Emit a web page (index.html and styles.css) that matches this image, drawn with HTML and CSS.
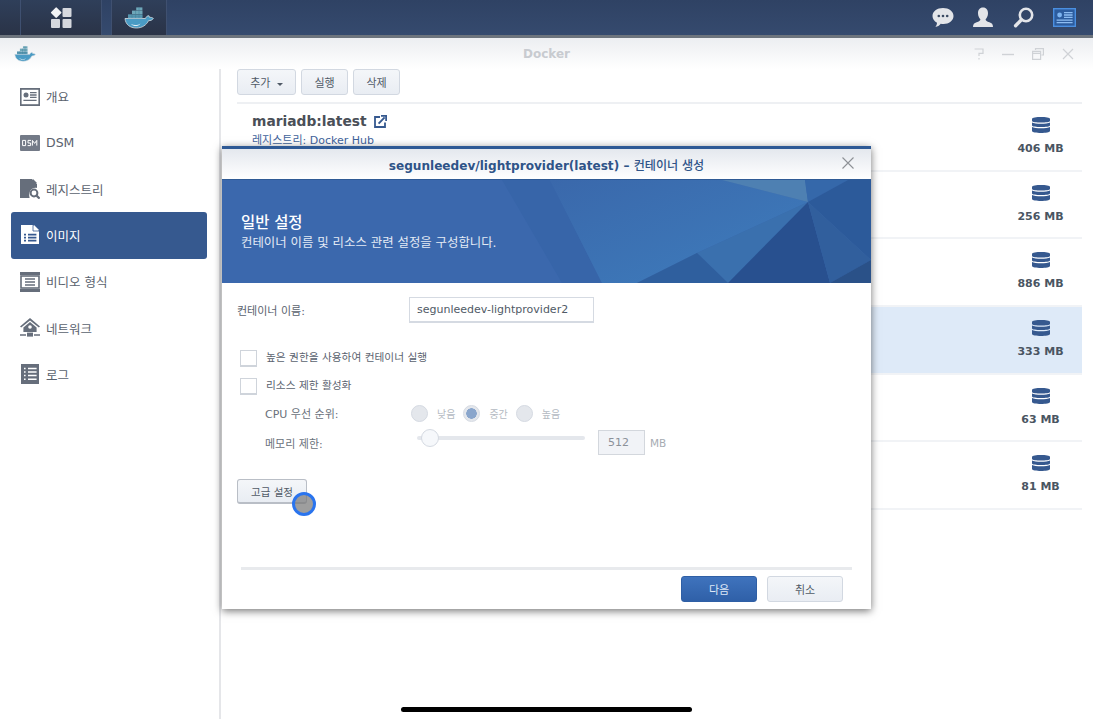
FILE: index.html
```html
<!DOCTYPE html>
<html lang="ko">
<head>
    <meta charset="UTF-8">
    <meta name="viewport" content="width=device-width, initial-scale=1.0">
    <title>Docker</title>
    <link rel="stylesheet" href="styles.css">
</head>
<body>
    <!-- Whale used in the taskbar and the window title -->
    <svg class="defs" width="0" height="0" xmlns="http://www.w3.org/2000/svg">
        <defs>
            <symbol id="whale" viewBox="0 0 30 22">
                <path d="M1 11.5 H21.5 C22.2 9.5 23.5 8.6 25 8.8 L25.6 10.4 C27 10.2 28.4 10.6 29.4 11.4 C28.4 13 26.4 13.8 24.6 13.6 C22.4 18.2 18 21 12.4 21 C6 21 1.6 17.6 1 11.5 Z" fill="#4a9bc4" stroke="#d7dde2" stroke-width=".8"/>
                <path d="M7 17 C10 18.6 14 18.4 16.4 16.4 C14.6 19.6 9.6 20 7 17 Z" fill="#dfeef5"/>
                <rect x="4" y="7.4" width="14.5" height="3.8" fill="#5d9cb5"/>
                <rect x="8" y="3.6" width="10.5" height="3.5" fill="#6ea7b9"/>
                <rect x="12.2" y="0.4" width="6.2" height="3" fill="#6ea7b9"/>
                <path d="M8 7.4 V11 M11.6 3.6 V11 M15 .4 V11 M4 9.2 H18.5" stroke="#3f7f99" stroke-width=".5" fill="none"/>
            </symbol>
            <symbol id="disk" viewBox="0 0 18 18">
                <path d="M0 3 C0 .4 18 .4 18 3 V5 C18 7 0 7 0 5 Z" fill="#36598f"/>
                <path d="M0 6.4 C3 8.2 15 8.2 18 6.4 V9.6 C18 11.6 0 11.6 0 9.6 Z" fill="#36598f"/>
                <path d="M0 11 C3 12.8 15 12.8 18 11 V15 C18 17.6 0 17.6 0 15 Z" fill="#36598f"/>
            </symbol>
        </defs>
    </svg>

    <header class="taskbar">
        <div class="task-left">
            <div class="task-stub"></div>
            <div class="task-btn task-home">
                <svg width="22" height="22" viewBox="0 0 22 22">
                    <rect x="2.2" y="1.6" width="8" height="8" rx="1" transform="rotate(45 6.2 5.6)" fill="#f2f3f5"/>
                    <rect x="12.5" y="1" width="9" height="9" rx="1" fill="#d5d8de"/>
                    <rect x="1" y="12" width="9" height="9" rx="1" fill="#d5d8de"/>
                    <rect x="12.5" y="12" width="9" height="9" rx="1" fill="#d5d8de"/>
                </svg>
            </div>
            <div class="task-btn task-docker">
                <svg width="30" height="22"><use href="#whale"/></svg>
            </div>
        </div>
        <div class="task-right">
            <svg class="tray-icon" width="22" height="21" viewBox="0 0 22 21">
                <path d="M11 1 C17 1 21.5 4.5 21.5 9 C21.5 13.5 17 17 11.5 17 C10.5 17 9.6 16.9 8.7 16.7 C7.4 18.4 5.6 19.6 3.4 20 C4.4 18.6 5 17.2 5 15.7 C2.2 14.2 .5 11.8 .5 9 C.5 4.5 5 1 11 1 Z" fill="#e3e5e9"/>
                <circle cx="6.8" cy="9" r="1.3" fill="#3a4a63"/><circle cx="11" cy="9" r="1.3" fill="#3a4a63"/><circle cx="15.2" cy="9" r="1.3" fill="#3a4a63"/>
            </svg>
            <svg class="tray-icon" width="22" height="21" viewBox="0 0 22 21">
                <path d="M11 .5 C14.4 .5 16 3 16 6.2 C16 9 14.8 11 13.6 12.2 C13.6 13.8 15 14.4 17.4 15.2 C19.8 16 21 17 21 20 H1 C1 17 2.2 16 4.6 15.2 C7 14.4 8.4 13.8 8.4 12.2 C7.2 11 6 9 6 6.2 C6 3 7.6 .5 11 .5 Z" fill="#e3e5e9"/>
            </svg>
            <svg class="tray-icon" width="22" height="21" viewBox="0 0 22 21">
                <circle cx="13" cy="8" r="6.2" fill="none" stroke="#e3e5e9" stroke-width="2.6"/>
                <path d="M8.4 12.8 L2.6 18.8" stroke="#e3e5e9" stroke-width="3.4" stroke-linecap="round"/>
            </svg>
            <svg class="tray-icon" width="23" height="19" viewBox="0 0 23 19">
                <rect width="23" height="19" fill="#4a8fe0"/>
                <rect x="1.4" y="1.4" width="20.2" height="16.2" fill="#2c5c9e"/>
                <circle cx="6.6" cy="7" r="2.4" fill="#7db4f0"/>
                <path d="M11 4.6 H19.6 M11 7 H19.6 M11 9.4 H19.6 M3.6 12.2 H19.6 M3.6 14.6 H19.6" stroke="#8dbdf2" stroke-width="1.3"/>
            </svg>
        </div>
    </header>

    <div class="window">
        <div class="win-title">
            <svg class="win-logo" width="22" height="16"><use href="#whale"/></svg>
            <span class="win-name">Docker</span>
            <div class="win-controls">
                <svg width="10" height="12" viewBox="0 0 10 12"><path d="M.6 1 H9 V5.4 H5 V8" stroke="#cfd2d6" fill="none" stroke-width="1.2"/><path d="M5 10 V11.6" stroke="#cfd2d6" stroke-width="1.2"/></svg>
                <svg width="12" height="12" viewBox="0 0 12 12"><path d="M0 6.5 H12" stroke="#cfd2d6" stroke-width="1.4"/></svg>
                <svg width="12" height="12" viewBox="0 0 12 12"><path d="M3.5 2 V.6 H11.4 V7 H9.5 M.6 3.4 H8.6 V11.4 H.6 Z M.6 5.4 H8.6" stroke="#cfd2d6" fill="none" stroke-width="1.2"/></svg>
                <svg width="12" height="12" viewBox="0 0 12 12"><path d="M1 1 L11 11 M11 1 L1 11" stroke="#cfd2d6" stroke-width="1.2"/></svg>
            </div>
        </div>

        <div class="win-body">
            <nav class="sidebar">
                <a class="nav-item">
                    <svg width="20" height="20" viewBox="0 0 20 20"><rect x="0" y="1" width="20" height="18" fill="#666e7b"/><rect x="1.6" y="2.8" width="16.8" height="14.4" fill="#fff"/><circle cx="6" cy="8" r="2.5" fill="#666e7b"/><path d="M10 5.6 H16.6 M10 8 H16.6 M10 10.4 H16.6 M3.4 13.4 H16.6" stroke="#666e7b" stroke-width="1.4"/></svg>
                    <span>개요</span>
                </a>
                <a class="nav-item">
                    <svg width="20" height="20" viewBox="0 0 20 20"><rect x="0" y="2" width="20" height="16" rx="1" fill="#737a87"/><path d="M2.6 7.4 H5.6 V12.6 H2.6 Z M11 7.4 H8 V10 H10.6 V12.6 H7.6 M12.4 12.6 V7.4 L14.6 10.4 L16.8 7.4 V12.6" stroke="#fff" stroke-width="1" fill="none"/></svg>
                    <span>DSM</span>
                </a>
                <a class="nav-item">
                    <svg width="20" height="20" viewBox="0 0 20 20"><path d="M0 0 H12 L17 5 V9 C12 8 8 12 9.6 19 H0 Z" fill="#666e7b"/><path d="M13 0 L17 4 H13 Z" fill="#666e7b"/><circle cx="14" cy="14" r="3.4" fill="none" stroke="#666e7b" stroke-width="2"/><path d="M16.6 16.6 L19.6 19.6" stroke="#666e7b" stroke-width="2.2"/></svg>
                    <span>레지스트리</span>
                </a>
                <a class="nav-item active">
                    <svg width="20" height="20" viewBox="0 0 20 20"><path d="M1 0 H13 L19 6 V19 H1 Z" fill="#fff"/><path d="M14 0 L19 5 H14 Z" fill="#fff"/><path d="M13 .2 V6 H19" stroke="#36598f" fill="none" stroke-width=".8"/><path d="M4 9.6 H6 M8 9.6 H16.4 M4 12.6 H6 M8 12.6 H16.4 M4 15.6 H6 M8 15.6 H16.4" stroke="#36598f" stroke-width="1.7"/></svg>
                    <span>이미지</span>
                </a>
                <a class="nav-item">
                    <svg width="20" height="20" viewBox="0 0 20 20"><rect x="0" y="0" width="20" height="3" fill="#666e7b"/><rect x="0" y="17" width="20" height="3" fill="#666e7b"/><rect x="1" y="4" width="18" height="12" fill="none" stroke="#666e7b" stroke-width="1.6"/><path d="M5 7 H15 M5 10 H15 M5 13 H15" stroke="#666e7b" stroke-width="1.4"/></svg>
                    <span>비디오 형식</span>
                </a>
                <a class="nav-item">
                    <svg width="20" height="20" viewBox="0 0 20 20"><path d="M10 0 L20 8.4 L18.8 9.6 L10 2.4 L1.2 9.6 L0 8.4 Z" fill="#666e7b"/><path d="M10 4 L16.6 9.4 V14 H3.4 V9.4 Z" fill="#666e7b"/><circle cx="10" cy="9" r="1.8" fill="#fff"/><rect x="7" y="14.6" width="6" height="4" fill="#666e7b"/><path d="M0 17 H6 M14 17 H20" stroke="#666e7b" stroke-width="1.4"/></svg>
                    <span>네트워크</span>
                </a>
                <a class="nav-item">
                    <svg width="20" height="20" viewBox="0 0 20 20"><rect x="1" y="0" width="18" height="20" fill="#666e7b"/><path d="M4 4.4 H5.6 M8 4.4 H16.6 M4 8 H5.6 M8 8 H16.6 M4 11.6 H5.6 M8 11.6 H16.6 M4 15.2 H5.6 M8 15.2 H16.6" stroke="#fff" stroke-width="1.5"/></svg>
                    <span>로그</span>
                </a>
            </nav>

            <main class="main">
                <div class="toolbar">
                    <button class="btn btn-add">추가 <i class="caret"></i></button>
                    <button class="btn">실행</button>
                    <button class="btn">삭제</button>
                </div>
                <div class="image-list">
                    <div class="image-row">
                        <div class="image-info">
                            <div class="image-name">mariadb:latest
                                <svg width="13" height="13" viewBox="0 0 13 13"><path d="M6 2 H1 V12 H11 V7.4" fill="none" stroke="#36598f" stroke-width="1.8"/><path d="M4.6 8.6 L10.6 2.4 M7 .9 H12.2 V6" fill="none" stroke="#36598f" stroke-width="1.9"/></svg>
                            </div>
                            <div class="image-reg">레지스트리: Docker Hub</div>
                        </div>
                        <div class="image-size"><svg width="18" height="18"><use href="#disk"/></svg><span>406 MB</span></div>
                    </div>
                    <div class="image-row">
                        <div class="image-size"><svg width="18" height="18"><use href="#disk"/></svg><span>256 MB</span></div>
                    </div>
                    <div class="image-row">
                        <div class="image-size"><svg width="18" height="18"><use href="#disk"/></svg><span>886 MB</span></div>
                    </div>
                    <div class="image-row selected">
                        <div class="image-size"><svg width="18" height="18"><use href="#disk"/></svg><span>333 MB</span></div>
                    </div>
                    <div class="image-row">
                        <div class="image-size"><svg width="18" height="18"><use href="#disk"/></svg><span>63 MB</span></div>
                    </div>
                    <div class="image-row">
                        <div class="image-size"><svg width="18" height="18"><use href="#disk"/></svg><span>81 MB</span></div>
                    </div>
                </div>
            </main>
        </div>
    </div>

    <!-- Create container dialog -->
    <section class="modal">
        <div class="modal-head">
            <h2><b>segunleedev/lightprovider(latest) – </b>컨테이너 생성</h2>
            <svg class="modal-close" width="12" height="12" viewBox="0 0 12 12"><path d="M.5 .5 L11.5 11.5 M11.5 .5 L.5 11.5" stroke="#8d9196" stroke-width="1.1"/></svg>
        </div>
        <div class="banner">
            <svg class="banner-art" width="649" height="103" viewBox="0 0 649 103">
                <defs>
                    <linearGradient id="glow" x1="0" y1="0" x2="1" y2="1">
                        <stop offset="0" stop-color="#3a68ab"/>
                        <stop offset="1" stop-color="#3e7dbd"/>
                    </linearGradient>
                </defs>
                <rect width="649" height="103" fill="#3b68ad"/>
                <polygon points="280,0 328,0 380,103 340,103" fill="#3765a9"/>
                <polygon points="328,0 500,0 586,22 475,73 415,103 380,103" fill="url(#glow)"/>
                <polygon points="500,0 583,0 586,22" fill="#4e80b2"/>
                <polygon points="583,0 626,0 586,22" fill="#3568aa"/>
                <polygon points="626,0 649,0 649,80 586,22" fill="#2c5a9a"/>
                <polygon points="586,22 475,73 506,103" fill="#3a70ae"/>
                <polygon points="475,73 415,103 506,103" fill="#2f5f9e"/>
                <polygon points="586,22 506,103 608,103" fill="#28508f"/>
                <polygon points="586,22 649,80 608,103" fill="#315f9d"/>
                <polygon points="649,80 608,103 649,103" fill="#2a5188"/>
            </svg>
            <h1>일반 설정</h1>
            <p>컨테이너 이름 및 리소스 관련 설정을 구성합니다.</p>
        </div>
        <form class="modal-body">
            <div class="name-row">
                <label>컨테이너 이름:</label>
                <input class="text-input" type="text" value="segunleedev-lightprovider2">
            </div>
            <div class="check-row first"><i class="check"></i><span>높은 권한을 사용하여 컨테이너 실행</span></div>
            <div class="check-row"><i class="check"></i><span>리소스 제한 활성화</span></div>
            <div class="limits">
                <div class="limit-label">CPU 우선 순위:</div>
                <div class="radios">
                    <i class="radio"></i><span>낮음</span>
                    <i class="radio on"></i><span>중간</span>
                    <i class="radio"></i><span>높음</span>
                </div>
                <div class="limit-label">메모리 제한:</div>
                <div class="memory">
                    <div class="slider"><i class="thumb"></i></div>
                    <div class="mem-input">512</div>
                    <span class="mem-unit">MB</span>
                </div>
            </div>
            <button class="btn btn-adv" type="button">고급 설정</button>
        </form>
        <div class="modal-foot">
            <button class="btn btn-primary" type="button">다음</button>
            <button class="btn btn-cancel" type="button">취소</button>
        </div>
    </section>

    <!-- iPad pointer and home bar sit on top of everything -->
    <div class="pointer"></div>
    <div class="home-bar"></div>
</body>
</html>
```

FILE: styles.css
```css
* {
    box-sizing: border-box;
}
html, body {
    height: 100%;
}
body {
    margin: 0;
    height: 719px;
    overflow: hidden;
    position: relative;
    background: #fff;
    font-family: "DejaVu Sans", "Noto Sans CJK KR", sans-serif;
    font-size: 11px;
    color: #505a66;
}
.defs {
    position: absolute;
}

/* taskbar */
.taskbar {
    height: 38px;
    display: flex;
    justify-content: space-between;
    background: linear-gradient(#2f4264, #354a6e);
    border-bottom: 3px solid #6d747d;
}
.task-left {
    display: flex;
    gap: 9px;
}
.task-stub {
    width: 20px;
    margin-right: -9px;
    background: linear-gradient(#2f3f5a, #2a3347);
}
.task-btn {
    height: 35px;
    display: flex;
    align-items: center;
    justify-content: center;
    background: linear-gradient(#2f3f5a, #2a3347);
    border-left: 1px solid #3f5070;
    border-right: 1px solid #3f5070;
}
.task-home {
    width: 82px;
}
.task-docker {
    width: 56px;
}
.task-right {
    display: flex;
    align-items: center;
    height: 35px;
    padding-right: 17px;
    gap: 18.5px;
}
.tray-icon {
    display: block;
}

/* docker window */
.window {
    height: 681px;
    display: flex;
    flex-direction: column;
}
.win-title {
    height: 31px;
    display: flex;
    align-items: center;
    position: relative;
    padding-left: 14px;
    background: linear-gradient(#eceef1, #fff);
}
.win-name {
    position: absolute;
    left: 0;
    right: 0;
    text-align: center;
    font-weight: bold;
    font-size: 12px;
    color: #c8cbd0;
}
.win-controls {
    margin-left: auto;
    display: flex;
    align-items: center;
    gap: 18px;
    padding-right: 19px;
    position: relative;
}
.win-body {
    flex: 1;
    display: flex;
}
.sidebar {
    width: 221px;
    padding: 4.4px 12px 0 11px;
    border-right: 2px solid #e5e6e9;
}
.nav-item {
    height: 46.3px;
    display: flex;
    align-items: center;
    gap: 6px;
    padding-left: 9px;
    font-size: 12.5px;
    color: #5a626e;
    border-radius: 3px;
}
.nav-item.active {
    background: #36598f;
    color: #fff;
}

/* image list */
.main {
    flex: 1;
    padding: 0 11px 0 16px;
}
.toolbar {
    display: flex;
    gap: 5px;
    height: 33px;
}
.btn {
    height: 26px;
    padding: 0;
    font-family: inherit;
    font-size: 11px;
    color: #505a66;
    background: linear-gradient(#f4f6f9, #e9edf3);
    border: 1px solid #d2d8e1;
    border-radius: 3px;
}
.toolbar .btn {
    width: 47px;
}
.toolbar .btn-add {
    width: 59px;
}
.caret {
    display: inline-block;
    margin-left: 3px;
    vertical-align: middle;
    border: 3px solid transparent;
    border-top: 3px solid #505a66;
    border-bottom: 0;
}
.image-list {
    border-top: 2px solid #eef0f3;
}
.image-row {
    height: 67.7px;
    display: flex;
    padding-left: 15px;
    border-bottom: 2px solid #f1f3f6;
}
.image-row.selected {
    background: #deeaf8;
}
.image-info {
    padding-top: 8px;
}
.image-name {
    font-size: 13.8px;
    line-height: 18px;
    font-weight: bold;
    color: #4a4f57;
}
.image-name svg {
    margin-left: 3px;
    vertical-align: -2px;
}
.image-reg {
    margin-top: 4px;
    font-size: 11px;
    line-height: 14px;
    color: #3f639b;
}
.image-size {
    margin-left: auto;
    width: 83px;
    padding-top: 12px;
    display: flex;
    flex-direction: column;
    align-items: center;
    gap: 8px;
    font-weight: bold;
    color: #4a5562;
}
.image-size svg {
    display: block;
}

/* dialog */
.modal {
    position: absolute;
    left: 222px;
    top: 146px;
    width: 649px;
    height: 463px;
    display: flex;
    flex-direction: column;
    background: #fff;
    border-top: 3px solid #2f5a95;
    box-shadow: 0 2px 8px rgba(0, 0, 0, 0.55);
}
.modal-head {
    height: 31px;
    display: flex;
    align-items: center;
    justify-content: center;
    position: relative;
    background: linear-gradient(#e4e8ee, #fff);
    border-bottom: 1px solid #2f5a95;
}
.modal-head h2 {
    margin: 0;
    font-size: 12.1px;
    font-weight: 500;
    color: #2f5488;
}
.modal-close {
    position: absolute;
    right: 17px;
    top: 8px;
}
.banner {
    height: 103px;
    position: relative;
    padding: 33px 0 0 19px;
    color: #fff;
}
.banner-art {
    position: absolute;
    left: 0;
    top: 0;
}
.banner h1, .banner p {
    position: relative;
    margin: 0;
}
.banner h1 {
    font-size: 15.4px;
    line-height: 20px;
    font-weight: 500;
}
.banner p {
    font-size: 12.4px;
    line-height: 20px;
    color: #e4ebf5;
}
.modal-body {
    flex: 1;
    padding: 14px 0 0 15px;
    color: #5a626e;
}
.name-row {
    display: flex;
    align-items: center;
    height: 26px;
}
.name-row label {
    width: 172px;
}
.text-input {
    width: 185px;
    height: 26px;
    padding: 0 7px;
    font-family: inherit;
    font-size: 11px;
    color: #505a66;
    border: 1px solid #d5dae2;
    border-bottom-width: 2px;
}
.check-row {
    display: flex;
    align-items: center;
    gap: 9px;
    height: 18px;
    margin: 10px 0 0 3px;
    font-size: 10.7px;
    line-height: 16px;
}
.check-row.first {
    margin-top: 26px;
}
.check {
    width: 17px;
    height: 17px;
    background: #fff;
    border: 1px solid #cfd4db;
    border-bottom-width: 2px;
}
.limits {
    display: grid;
    grid-template-columns: 146px 1fr;
    grid-template-rows: 30px 29px;
    align-items: center;
    margin: 3px 0 0 28px;
}
.limit-label {
    font-size: 11px;
    color: #6a717b;
}
.radios {
    display: flex;
    align-items: center;
    font-size: 10px;
    color: #b4bac2;
}
.radio {
    width: 17px;
    height: 17px;
    margin-right: 9px;
    border-radius: 50%;
    background: #e4e7ec;
    border: 1px solid #d5dae2;
}
.radios span {
    margin-right: 8px;
}
.radio.on {
    background: radial-gradient(circle, #8aa6cc 0 5px, #e4e7ec 5.5px);
}
.memory {
    display: flex;
    align-items: center;
}
.slider {
    width: 168px;
    height: 4px;
    margin: -10px 13px 0 6px;
    position: relative;
    background: #e4e7ec;
    border-radius: 2px;
}
.thumb {
    position: absolute;
    left: 4px;
    top: -7px;
    width: 18px;
    height: 18px;
    border-radius: 50%;
    background: #f6f8fb;
    border: 1px solid #d5dae2;
}
.mem-input {
    width: 47px;
    height: 25px;
    line-height: 23px;
    padding-left: 9px;
    color: #8b9199;
    background: #f1f3f7;
    border: 1px solid #d3d7dd;
}
.mem-unit {
    margin-left: 5px;
    font-size: 10.5px;
    color: #a6abb2;
}
.btn-adv {
    display: block;
    width: 70px;
    height: 25px;
    margin-top: 22px;
    font-size: 10.5px;
    border-color: #b9bec6;
    border-bottom-width: 2px;
}
.modal-foot {
    margin: 0 19px;
    height: 42px;
    display: flex;
    justify-content: flex-end;
    align-items: flex-start;
    gap: 10px;
    padding: 6px 9px 0 0;
    border-top: 3px solid #e8eaed;
}
.modal-foot .btn {
    width: 76px;
    font-size: 11px;
}
.btn-primary {
    color: #dfe9f6;
    border-color: #2f5fa5;
    background: linear-gradient(#3f73bd, #2f60a8);
}

/* overlays */
.pointer {
    position: absolute;
    left: 292px;
    top: 492px;
    width: 24px;
    height: 24px;
    border-radius: 50%;
    background: rgba(120, 120, 120, 0.72);
    border: 3px solid #2a74ee;
}
.home-bar {
    position: absolute;
    left: 401px;
    top: 707px;
    width: 291px;
    height: 5px;
    border-radius: 3px;
    background: #000;
}
```
